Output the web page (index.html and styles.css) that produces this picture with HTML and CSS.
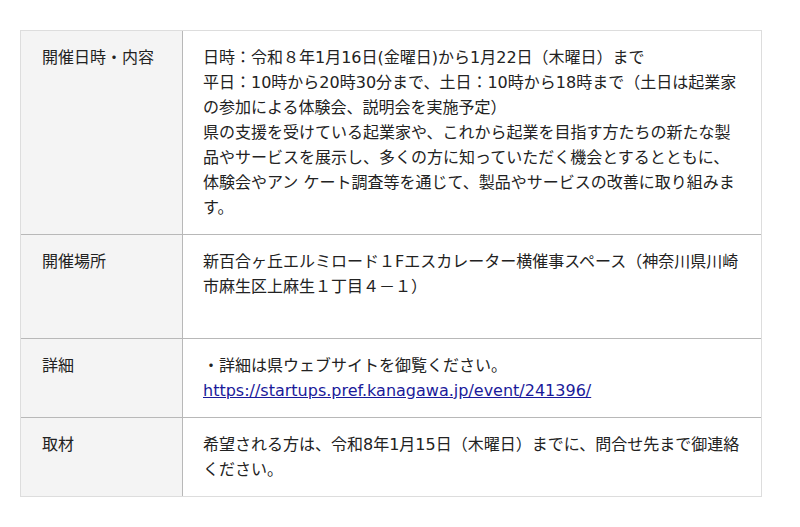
FILE: index.html
```html
<!DOCTYPE html>
<html lang="ja">
<head>
<meta charset="utf-8">
<title>開催概要</title>
<link rel="stylesheet" href="styles.css">
</head>
<body>
<div class="wrap">
<table class="info">
  <tr>
    <th class="label">開催日時・内容</th>
    <td class="value">日時：令和８年1月16日(金曜日)から1月22日（木曜日）まで<br>平日：10時から20時30分まで、土日：10時から18時まで（土日は起業家の参加による体験会、説明会を実施予定）<br>県の支援を受けている起業家や、これから起業を目指す方たちの新たな製品やサービスを展示し、多くの方に知っていただく機会とするとともに、体験会やアン ケート調査等を通じて、製品やサービスの改善に取り組みます。</td>
  </tr>
  <tr>
    <th class="label">開催場所</th>
    <td class="value">新百合ヶ丘エルミロード１Fエスカレーター横催事スペース（神奈川県川崎市麻生区上麻生１丁目４－１）<br><br></td>
  </tr>
  <tr>
    <th class="label">詳細</th>
    <td class="value">・詳細は県ウェブサイトを御覧ください。<br><a class="link" href="#">https://startups.pref.kanagawa.jp/event/241396/</a></td>
  </tr>
  <tr>
    <th class="label">取材</th>
    <td class="value">希望される方は、令和8年1月15日（木曜日）までに、問合せ先まで御連絡ください。</td>
  </tr>
</table>
</div>
</body>
</html>
```
FILE: styles.css
```css
html, body {
  margin: 0;
  padding: 0;
  background: #ffffff;
}
.wrap {
  padding: 30px 38px 0 20px;
}
.info {
  width: 742px;
  border-collapse: separate;
  border-spacing: 0;
  border: 1px solid #dddddd;
  font-family: "DejaVu Sans", "Noto Sans CJK JP", sans-serif;
  font-size: 16px;
  line-height: 25px;
  color: #222222;
  table-layout: fixed;
}
.label {
  width: 140px;
  background: #f4f4f4;
  font-weight: normal;
  text-align: left;
  vertical-align: top;
  padding: 14px 0 14px 21px;
  border-right: 1px solid #b8b8b8;
}
.value {
  vertical-align: top;
  padding: 14px 18px 14px 20px;
}
.info tr + tr .label,
.info tr + tr .value {
  border-top: 1px solid #b8b8b8;
}
.link {
  color: #1a1a9a;
  text-decoration: underline;
}
```
